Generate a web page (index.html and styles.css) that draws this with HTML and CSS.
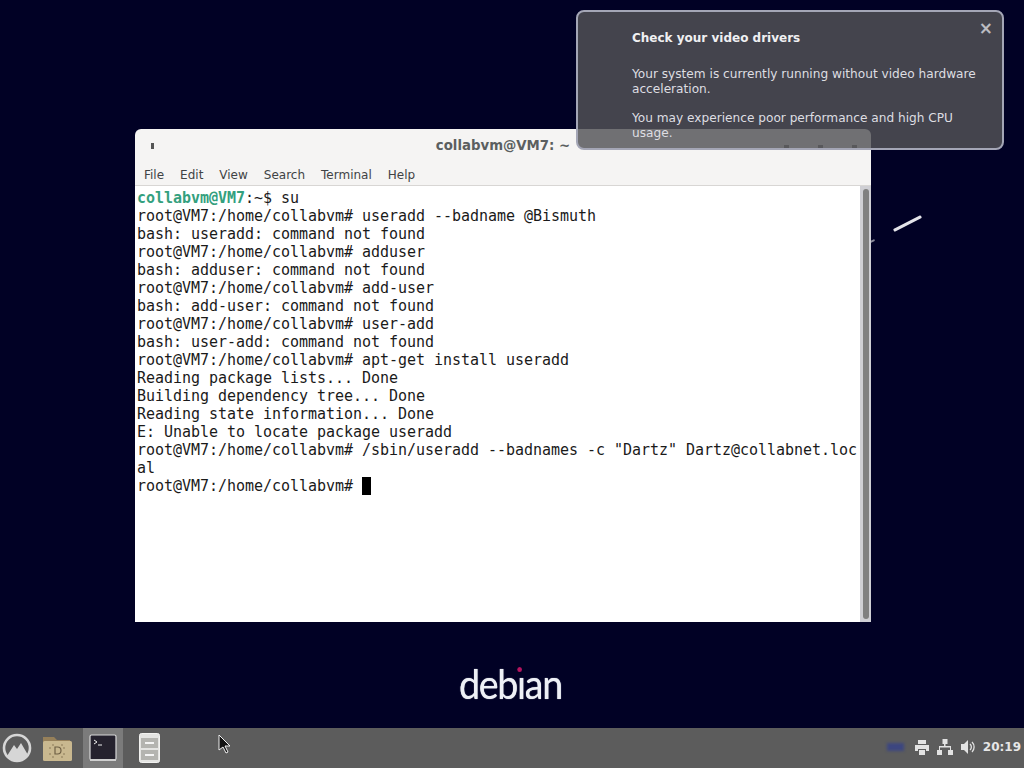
FILE: index.html
```html
<!DOCTYPE html>
<html lang="en">
<head>
<meta charset="utf-8">
<title>Debian desktop</title>
<link rel="stylesheet" href="styles.css">
</head>
<body>
<div class="desktop">
  <div class="logo"><span>deb</span><span class="logo-i">ı<i class="logo-dot"></i></span><span>an</span></div>
  <div class="swoosh swoosh-a"></div>
  <div class="swoosh swoosh-b"></div>

  <section class="window">
    <header class="titlebar">
      <span class="title-icon"></span>
      <span class="title">collabvm@VM7: ~</span>
      <span class="wm-buttons"><i class="wm-btn"></i><i class="wm-btn"></i><i class="wm-btn"></i></span>
    </header>
    <nav class="menubar">
      <span>File</span><span>Edit</span><span>View</span><span>Search</span><span>Terminal</span><span>Help</span>
    </nav>
    <div class="term-body">
      <pre class="term"><span class="prompt">collabvm@VM7</span>:~$ su
root@VM7:/home/collabvm# useradd --badname @Bismuth
bash: useradd: command not found
root@VM7:/home/collabvm# adduser
bash: adduser: command not found
root@VM7:/home/collabvm# add-user
bash: add-user: command not found
root@VM7:/home/collabvm# user-add
bash: user-add: command not found
root@VM7:/home/collabvm# apt-get install useradd
Reading package lists... Done
Building dependency tree... Done
Reading state information... Done
E: Unable to locate package useradd
root@VM7:/home/collabvm# /sbin/useradd --badnames -c "Dartz" Dartz@collabnet.loc
al
root@VM7:/home/collabvm# <span class="cursor"> </span></pre>
      <div class="scrollbar"><div class="thumb"></div></div>
    </div>
  </section>

  <aside class="notice">
    <span class="notice-close">×</span>
    <h2 class="notice-title">Check your video drivers</h2>
    <p class="notice-text">Your system is currently running without video hardware acceleration.</p>
    <p class="notice-text">You may experience poor performance and high CPU usage.</p>
  </aside>
</div>

<footer class="panel">
  <div class="launchers">
    <div class="launcher launcher-menu">
      <svg width="32" height="32" viewBox="0 0 32 32"><circle cx="16" cy="16" r="13" fill="none" stroke="#d6d6d6" stroke-width="2.6"/><path d="M6 24 L13 13 L16 17 L20 11 L27 23 A13 13 0 0 1 6 24Z" fill="#d6d6d6"/></svg>
    </div>
    <div class="launcher launcher-folder">
      <svg width="32" height="30" viewBox="0 0 32 30"><path d="M2 4h11l3 3h13v5H2z" fill="#96805a"/><rect x="2" y="8" width="29" height="20" rx="1.500" fill="#c9b88f"/><path d="M9 14v2M9 20v2M23 14v2M23 20v2M11 12h2M20 12h2M11 24h2M20 24h2" stroke="#8b7a58" stroke-width="1"/><path d="M14 14h2.500a3.500 3.500 0 0 1 0 7H14z" fill="none" stroke="#6f6045" stroke-width="1.200"/></svg>
    </div>
    <div class="launcher launcher-term">
      <svg width="28" height="28" viewBox="0 0 28 28"><rect x="1" y="1" width="26" height="25" rx="1.500" fill="#25222e" stroke="#d8d8d8" stroke-width="1.200"/><path d="M1 25h26v2H1z" fill="#cfcfcf"/><path d="M5 6l3 2-3 2" fill="none" stroke="#eee" stroke-width="1"/><path d="M9 11h4" stroke="#eee" stroke-width="1"/></svg>
    </div>
    <div class="launcher launcher-files">
      <svg width="21" height="30" viewBox="0 0 21 30"><rect x="0.500" y="0.500" width="20" height="29" rx="2" fill="#e4e4e2" stroke="#f2f2f0"/><rect x="2" y="5" width="17" height="10" fill="#b4b4b0"/><rect x="2" y="17" width="17" height="10" fill="#b4b4b0"/><rect x="6" y="9" width="9" height="2" fill="#f4f4f4"/><rect x="6" y="21" width="9" height="2" fill="#f4f4f4"/></svg>
    </div>
  </div>
  <svg class="pointer" width="14" height="20" viewBox="0 0 14 20"><path d="M1 1v15l4-3 3 6 2-1-3-6h5z" fill="#111" stroke="#eee" stroke-width="1"/></svg>
  <div class="tray">
    <span class="tray-blur"></span>
    <svg width="16" height="15" viewBox="0 0 16 15"><path d="M4 0h8v4H4zM1 5h14v6h-3V9H4v2H1zM5 10h6v5H5z" fill="#e2e2e2"/></svg>
    <svg width="16" height="16" viewBox="0 0 16 16"><path d="M5.500 0h5v5h-2v2H14v4h2v5h-5v-5h2V8.500H3V11h2v5H0v-5h2V7h5V5H5.500z" fill="#e2e2e2"/></svg>
    <svg width="16" height="16" viewBox="0 0 16 16"><path d="M1 5h3l4-4v14l-4-4H1z" fill="#e2e2e2"/><path d="M10 5a4 4 0 0 1 0 6M12 3a7 7 0 0 1 0 10" fill="none" stroke="#e2e2e2" stroke-width="1.300"/></svg>
    <span class="clock">20:19</span>
  </div>
</footer>
</body>
</html>
```
FILE: styles.css
```css
html, body { margin: 0; padding: 0; height: 100%; overflow: hidden; }
body {
  width: 1024px; height: 768px;
  display: flex; flex-direction: column;
  background: #010125;
  font-family: "DejaVu Sans", sans-serif;
}
.desktop { position: relative; flex: 1; overflow: hidden; }

.logo {
  position: absolute; left: 459px; top: 658px;
  display: flex;
  font-family: "Lato", "Liberation Sans", sans-serif;
  font-size: 40px; line-height: 52px;
  letter-spacing: -1.400px;
  color: #eef0f6;
  text-shadow: 0 0 1px #eef0f6;
  transform: scaleX(0.94); transform-origin: left top;
}
.logo-i { position: relative; }
.logo-dot {
  position: absolute; left: 0; top: 9px;
  width: 5px; height: 5px; border-radius: 50%;
  background: #b5155f;
}
.swoosh { position: absolute; background: #e4e4ea; transform: rotate(-27deg); border-radius: 1px; }
.swoosh-a { left: 892px; top: 222px; width: 31px; height: 3px; }
.swoosh-b { left: 870px; top: 240px; width: 5px; height: 2px; background: #8a8a9a; }

.window {
  position: absolute; left: 135px; top: 129px;
  width: 736px; height: 493px;
  display: flex; flex-direction: column;
  background: #f5f4f3;
  border-radius: 6px 6px 0 0;
  box-sizing: border-box;
}
.titlebar {
  height: 32px; flex: none; position: relative;
  display: flex; align-items: center; justify-content: center;
}
.title-icon {
  position: absolute; left: 16px; top: 14px;
  width: 3px; height: 6px; background: #555;
}
.title { font-size: 13.300px; font-weight: bold; color: #5b5f60; }
.wm-buttons {
  position: absolute; right: 14px; top: 16px;
  display: flex; gap: 29px;
}
.wm-btn { width: 5px; height: 4px; background: #6e6e6e; }
.menubar {
  height: 25px; flex: none;
  display: flex; gap: 16px; align-items: center;
  padding: 4px 0 0 9px; box-sizing: border-box;
  font-size: 12px; color: #3f4345;
  border-bottom: 1px solid #d8d6d4;
}
.term-body { flex: 1; display: flex; background: #fff; min-height: 0; }
.term {
  flex: 1; margin: 0; padding: 3px 0 0 2px;
  font-family: "DejaVu Sans Mono", monospace;
  font-size: 15px; line-height: 18px;
  letter-spacing: -0.030px;
  color: #1a1a1a;
}
.prompt { color: #34a07e; font-weight: bold; }
.cursor { display: inline-block; width: 9px; height: 18px; background: #000; vertical-align: top; }
.scrollbar {
  width: 11px; flex: none; background: #cfcfd4;
  padding: 3px 2px 3px 3px; box-sizing: border-box;
}
.thumb { height: 100%; width: 6px; background: #808080; border-radius: 3px; }

.notice {
  position: absolute; left: 576px; top: 10px;
  width: 428px; height: 140px;
  box-sizing: border-box;
  padding: 18px 20px 0 54px;
  background: rgba(83, 83, 87, 0.82);
  border: 2px solid #a4a6b6;
  border-radius: 8px;
  color: #dedee2;
  overflow: hidden;
}
.notice-close {
  position: absolute; right: 9px; top: 6px;
  font-size: 17px; line-height: 20px; font-weight: bold; color: #bcbcc2;
}
.notice-title {
  margin: 0 0 21px; font-size: 12px; line-height: 16px; font-weight: bold; color: #f0f0f2;
}
.notice-text { margin: 0 0 14px; font-size: 12.150px; line-height: 15px; }

.panel {
  height: 40px; flex: none; position: relative;
  display: flex; align-items: center; justify-content: space-between;
  background: #5c5c5c;
}
.launchers { display: flex; align-items: stretch; height: 100%; }
.launcher { display: flex; align-items: center; justify-content: center; width: 40px; }
.launcher-menu { width: 34px; }
.launcher-folder { width: 46px; }
.launcher-term { width: 40px; background: #7b7b7b; margin-left: 3px; }
.launcher-files { width: 52px; }
.pointer { position: absolute; left: 218px; top: 6px; }
.tray { display: flex; align-items: center; gap: 7px; padding: 0 3px 2px 0; }
.tray-blur { width: 17px; height: 8px; background: #3c4680; margin-right: 3px; filter: blur(1.500px); }
.clock { font-size: 12px; font-weight: bold; color: #e6e6e6; }
```
